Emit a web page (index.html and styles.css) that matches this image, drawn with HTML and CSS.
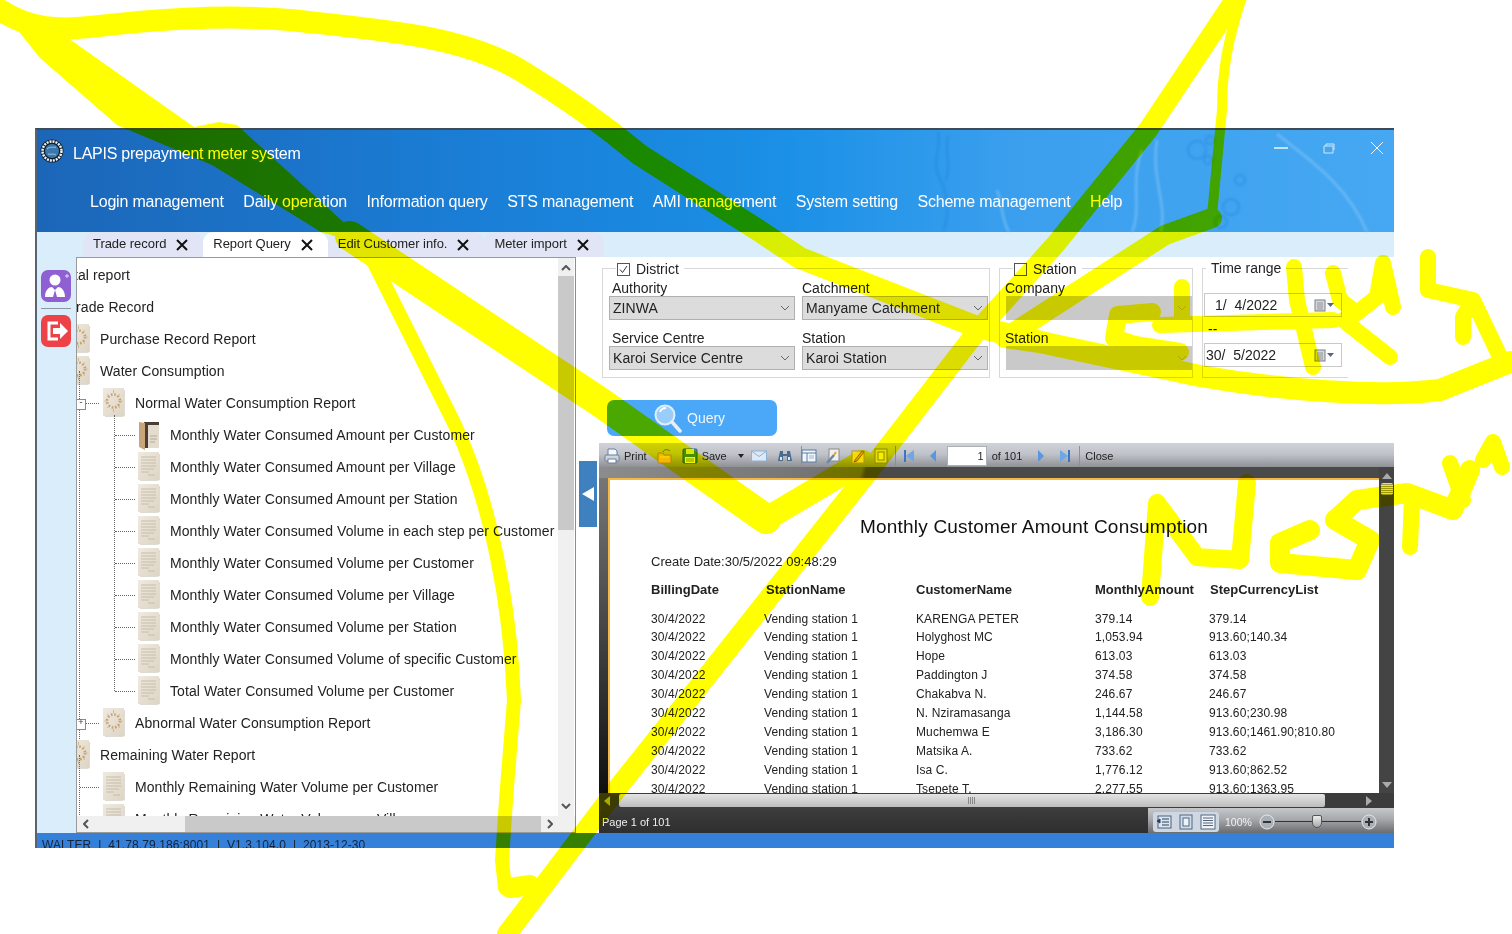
FILE: index.html
```html
<!DOCTYPE html>
<html lang="en">
<head>
<meta charset="utf-8">
<title>LAPIS prepayment meter system</title>
<link rel="stylesheet" href="styles.css">
</head>
<body>
<svg class="defs" width="0" height="0" aria-hidden="true">
  <defs>
    <linearGradient id="paper" x1="0" y1="0" x2="1" y2="1"><stop offset="0" stop-color="#efeadf"/><stop offset="1" stop-color="#ddd4c4"/></linearGradient>
    <symbol id="doc" viewBox="0 0 24 32">
      <path d="M3 3h20v26l-3 1H3z" fill="#b9ae9c" opacity=".45"/>
      <rect x="1" y="1" width="21" height="28" fill="url(#paper)"/>
      <path d="M4 6h15M4 9h15M4 12h15M4 15h15M4 18h13M4 21h8M11 24h7" stroke="#c6bcaa" stroke-width="1"/>
    </symbol>
    <symbol id="gear" viewBox="0 0 24 32">
      <path d="M3 3h20v26l-3 1H3z" fill="#b9ae9c" opacity=".45"/>
      <rect x="1" y="1" width="21" height="28" fill="url(#paper)"/>
      <circle cx="11.500" cy="14" r="6.500" fill="none" stroke="#c8a06c" stroke-width="2.600" stroke-dasharray="1.600 1.800"/>
      <path d="M11.500 3v3M11.500 22v3M2.500 14h3M17.500 14h3M5 7l2 2M18 7l-2 2M5 21l2-2M18 21l-2-2" stroke="#cdb894"/>
    </symbol>
    <symbol id="book" viewBox="0 0 24 32">
      <path d="M7 3h15v26H7z" fill="#e4ddcf"/>
      <path d="M7 3h15v3H11v23H7z" fill="#4a3d33"/>
      <path d="M2 3l6 1v27l-6-3z" fill="#c9a679"/>
      <path d="M13 17h7M13 20h7M13 23h5" stroke="#b5aa96"/>
    </symbol>
    <symbol id="chev" viewBox="0 0 10 6"><path d="M1 1l4 4 4-4" fill="none" stroke="#666" stroke-width="1"/></symbol>
    <symbol id="x" viewBox="0 0 12 12"><path d="M1 1l10 10M11 1L1 11" stroke="#111" stroke-width="2"/></symbol>
    <symbol id="cal" viewBox="0 0 20 13">
      <rect x="1" y="1" width="10" height="11" fill="#d8d8d8" stroke="#77808c"/>
      <path d="M3 4h6M3 6h6M3 8h6M3 10h6" stroke="#8d95a0"/>
      <path d="M13 4h7l-3.500 4z" fill="#5c6678"/>
    </symbol>
  </defs>
</svg>

<div class="page">
  <div class="window">
    <header class="head">
      <svg class="splash" viewBox="0 0 1359 102" width="1359" height="102" aria-hidden="true">
        <g fill="none" stroke="#1f7fd8" stroke-width="2" opacity=".4">
          <path d="M901 2c4 14-6 28 0 42s14 28 6 56"/>
          <path d="M911 6c-4 16 4 26-2 44"/>
          <circle cx="1160" cy="20" r="9"/><circle cx="1173" cy="10" r="4"/><circle cx="1171" cy="30" r="4"/>
          <circle cx="1203" cy="50" r="5"/><circle cx="1194" cy="77" r="8"/><circle cx="1184" cy="92" r="6"/>
        </g>
        <g fill="none" stroke="#8ccaf8" stroke-width="3" opacity=".45">
          <path d="M1105 20c-12 30 0 60-10 82"/>
          <path d="M1120 10c-6 40 10 60 4 92"/>
          <path d="M1240 4c30 24 70 50 90 98"/>
          <path d="M960 60c6 14 4 30 12 42"/>
        </g>
      </svg>
      <div class="titlebar">
        <svg class="logo" viewBox="0 0 24 24" width="24" height="24" aria-hidden="true">
          <circle cx="12" cy="12" r="11.500" fill="#10202f"/>
          <circle cx="12" cy="12" r="9.500" fill="none" stroke="#eef2f6" stroke-width="2.500" stroke-dasharray="2 1"/>
          <circle cx="12" cy="12" r="7" fill="#3a78ac"/>
          <path d="M7 10c3-3 6-1 9-2M8 15c3 1 6-1 8 1" stroke="#9cc4e4" fill="none"/>
        </svg>
        <span class="title">LAPIS prepayment meter system</span>
        <div class="winctl">
          <svg viewBox="0 0 16 16" width="16" height="16" aria-hidden="true"><path d="M1 8h14" stroke="#bfe3fb" stroke-width="2"/></svg>
          <svg viewBox="0 0 16 16" width="16" height="16" aria-hidden="true"><path d="M3 6h9v7H3zM5 6V4h8v6" fill="none" stroke="#cfe9fb"/></svg>
          <svg viewBox="0 0 16 16" width="16" height="16" aria-hidden="true"><path d="M2 2l12 12M14 2L2 14" stroke="#fff" stroke-width="1"/></svg>
        </div>
      </div>
      <nav class="nav">
        <span>Login management</span><span>Daily operation</span><span>Information query</span><span>STS management</span><span>AMI management</span><span>System setting</span><span>Scheme management</span><span>Help</span>
      </nav>
    </header>

    <div class="tabs">
      <div class="tab"><span>Trade record</span><svg class="x"><use href="#x"/></svg></div>
      <div class="tab active"><span>Report Query</span><svg class="x"><use href="#x"/></svg></div>
      <div class="tab"><span>Edit Customer info.</span><svg class="x"><use href="#x"/></svg></div>
      <div class="tab"><span>Meter import</span><svg class="x"><use href="#x"/></svg></div>
    </div>

    <main class="main">
      <aside class="rail">
        <button class="railbtn purple" type="button" aria-label="User">
          <svg viewBox="0 0 30 32" width="30" height="32" aria-hidden="true"><circle cx="14" cy="10" r="5.500" fill="#fff"/><path d="M4 27c0-7 4-10 7-10l3 3 3-3c3 0 7 3 7 10h-8l-2-7-2 7z" fill="#fff"/><path d="M24 6h4M26 4v4" stroke="#e6dcf6"/></svg>
        </button>
        <div class="raildiv"></div>
        <button class="railbtn red" type="button" aria-label="Exit">
          <svg viewBox="0 0 30 32" width="30" height="32" aria-hidden="true"><path d="M17 8H8v16h9" fill="none" stroke="#fff" stroke-width="3"/><path d="M12 13h7V8l8 8-8 8v-5h-7z" fill="#fff"/></svg>
        </button>
      </aside>

      <section class="tree">
        <div class="treebody">
          <ul class="rows">
            <li class="row l0 shifted"><span class="lbl">Total report</span></li>
            <li class="row l0"><span class="lbl">Trade Record</span></li>
            <li class="row l1"><svg class="ic"><use href="#gear"/></svg><span class="lbl">Purchase Record Report</span></li>
            <li class="row l1"><svg class="ic"><use href="#gear"/></svg><span class="lbl">Water Consumption</span></li>
            <li>
              <ul class="kids k1">
                <li class="row l2 conn minus"><svg class="ic"><use href="#gear"/></svg><span class="lbl">Normal Water Consumption Report</span></li>
                <li>
                  <ul class="kids k2">
                    <li class="row l3 conn"><svg class="ic"><use href="#book"/></svg><span class="lbl">Monthly Water Consumed Amount per Customer</span></li>
                    <li class="row l3 conn"><svg class="ic"><use href="#doc"/></svg><span class="lbl">Monthly Water Consumed Amount per Village</span></li>
                    <li class="row l3 conn"><svg class="ic"><use href="#doc"/></svg><span class="lbl">Monthly Water Consumed Amount per Station</span></li>
                    <li class="row l3 conn"><svg class="ic"><use href="#doc"/></svg><span class="lbl">Monthly Water Consumed Volume in each step per Customer</span></li>
                    <li class="row l3 conn"><svg class="ic"><use href="#doc"/></svg><span class="lbl">Monthly Water Consumed Volume per Customer</span></li>
                    <li class="row l3 conn"><svg class="ic"><use href="#doc"/></svg><span class="lbl">Monthly Water Consumed Volume per Village</span></li>
                    <li class="row l3 conn"><svg class="ic"><use href="#doc"/></svg><span class="lbl">Monthly Water Consumed Volume per Station</span></li>
                    <li class="row l3 conn"><svg class="ic"><use href="#doc"/></svg><span class="lbl">Monthly Water Consumed Volume of specific Customer</span></li>
                    <li class="row l3 conn"><svg class="ic"><use href="#doc"/></svg><span class="lbl">Total Water Consumed Volume per Customer</span></li>
                  </ul>
                </li>
                <li class="row l2 conn plus"><svg class="ic"><use href="#gear"/></svg><span class="lbl">Abnormal Water Consumption Report</span></li>
              </ul>
            </li>
            <li class="row l1"><svg class="ic"><use href="#gear"/></svg><span class="lbl">Remaining Water Report</span></li>
            <li>
              <ul class="kids k1">
                <li class="row l2 conn"><svg class="ic"><use href="#doc"/></svg><span class="lbl">Monthly Remaining Water Volume per Customer</span></li>
                <li class="row l2 conn"><svg class="ic"><use href="#doc"/></svg><span class="lbl">Monthly Remaining Water Volume per Village</span></li>
              </ul>
            </li>
          </ul>
          <div class="vscroll">
            <svg class="arrow" viewBox="0 0 10 6" width="10" height="6" aria-hidden="true"><path d="M1 5l4-4 4 4" fill="none" stroke="#555" stroke-width="2"/></svg>
            <div class="vthumb"></div>
            <svg class="arrow arrow-end" viewBox="0 0 10 6" width="10" height="6" aria-hidden="true"><path d="M1 1l4 4 4-4" fill="none" stroke="#555" stroke-width="2"/></svg>
          </div>
        </div>
        <div class="hscroll">
          <svg viewBox="0 0 6 10" width="6" height="10" aria-hidden="true"><path d="M5 1L1 5l4 4" fill="none" stroke="#555" stroke-width="2"/></svg>
          <div class="hthumb"></div>
          <svg viewBox="0 0 6 10" width="6" height="10" aria-hidden="true"><path d="M1 1l4 4-4 4" fill="none" stroke="#555" stroke-width="2"/></svg>
        </div>
      </section>

      <section class="right">
        <form class="filters">
          <fieldset class="fs fs-district">
            <legend><span class="check"><svg viewBox="0 0 13 13" width="13" height="13" aria-hidden="true"><path d="M3 6.500l2.500 3L10 3" fill="none" stroke="#333"/></svg></span>District</legend>
            <div class="fieldgrid">
              <div class="field"><label class="flabel">Authority</label><div class="sel"><span>ZINWA</span><svg class="chev"><use href="#chev"/></svg></div></div>
              <div class="field alt"><label class="flabel">Catchment</label><div class="sel"><span>Manyame Catchment</span><svg class="chev"><use href="#chev"/></svg></div></div>
              <div class="field"><label class="flabel">Service Centre</label><div class="sel"><span>Karoi Service Centre</span><svg class="chev"><use href="#chev"/></svg></div></div>
              <div class="field alt"><label class="flabel">Station</label><div class="sel"><span>Karoi Station</span><svg class="chev"><use href="#chev"/></svg></div></div>
            </div>
          </fieldset>
          <fieldset class="fs fs-station">
            <legend><span class="check"></span>Station</legend>
            <div class="fieldgrid single">
              <div class="field alt out"><label class="flabel">Company</label><div class="sel off"><span></span><svg class="chev"><use href="#chev"/></svg></div></div>
              <div class="field alt out"><label class="flabel">Station</label><div class="sel off"><span></span><svg class="chev"><use href="#chev"/></svg></div></div>
            </div>
          </fieldset>
          <fieldset class="fs fs-time">
            <legend class="plain">Time range</legend>
            <div class="date first"><span>1/  4/2022</span><svg class="cal"><use href="#cal"/></svg></div>
            <div class="dash">--</div>
            <div class="date"><span>30/  5/2022</span><svg class="cal"><use href="#cal"/></svg></div>
          </fieldset>
        </form>

        <button class="query" type="button">
          <svg viewBox="0 0 30 30" width="30" height="30" aria-hidden="true"><circle cx="12" cy="12" r="9.500" fill="#cfe6fb" fill-opacity=".6" stroke="#dfeefb" stroke-width="2"/><path d="M7 9c1-3 3-4 6-4" stroke="#fff" stroke-width="2" fill="none"/><path d="M19 19l8 9" stroke="#e9eef3" stroke-width="3.500" stroke-linecap="round"/></svg>
          <span>Query</span>
        </button>

        <div class="lower">
          <div class="gutter"><button class="collapse" type="button" aria-label="Collapse"><svg viewBox="0 0 12 14" width="12" height="14" aria-hidden="true"><path d="M12 0v14L0 7z" fill="#fff"/></svg></button></div>
          <div class="viewer">
            <div class="toolbar">
              <div class="tgroup">
                <svg class="ti" viewBox="0 0 16 16" aria-hidden="true"><path d="M4 7V1h7l2 2v4" fill="#f4f7fb" stroke="#6d7f96"/><rect x="1" y="7" width="14" height="6" rx="1" fill="#cdd5df" stroke="#6d7f96"/><rect x="4" y="11" width="8" height="4" fill="#fff" stroke="#6d7f96"/></svg>
                <span>Print</span>
              </div>
              <svg class="ti m-open" viewBox="0 0 16 16" aria-hidden="true"><path d="M1 5h5l1 2h7v8H1z" fill="#f2b928" stroke="#b98612"/><path d="M6 4c1-3 5-3 7-1" fill="none" stroke="#5a7f96"/><path d="M3 9h9" stroke="#fbe08a"/></svg>
              <div class="tgroup m-save">
                <svg class="ti" viewBox="0 0 16 16" aria-hidden="true"><rect x="1" y="1" width="14" height="14" rx="1" fill="#4a8ed0" stroke="#2a6099"/><rect x="4" y="1" width="8" height="5" fill="#dbe8f4"/><rect x="3" y="9" width="10" height="6" fill="#eef6e0"/><path d="M4 11h8M4 13h8" stroke="#7aa04a"/></svg>
                <span>Save</span>
              </div>
              <svg class="tcaret m-caret" viewBox="0 0 6 4" width="6" height="4" aria-hidden="true"><path d="M0 0h6L3 4z" fill="#222"/></svg>
              <svg class="ti m-mail" viewBox="0 0 16 16" aria-hidden="true"><rect x="0.500" y="3" width="15" height="10" fill="#dde9f6" stroke="#8fb0d0"/><path d="M1 3.500l7 5 7-5" fill="none" stroke="#8fb0d0"/></svg>
              <svg class="ti m-bino" viewBox="0 0 16 16" aria-hidden="true"><path d="M3 3h3v3h4V3h3l2 10h-5V8H6v5H1z" fill="#4a6a8e"/><path d="M3 9h2v3H3zM11 9h2v3h-2z" fill="#dde9f6"/></svg>
              <i class="tsep m-sep1"></i>
              <svg class="ti m-layout" viewBox="0 0 16 16" aria-hidden="true"><rect x="1" y="2" width="14" height="12" fill="#f2f6fb" stroke="#5a7da4"/><path d="M1 5h14M6 5v9" stroke="#5a7da4"/><path d="M8 8h5M8 10h5" stroke="#9db4cc"/></svg>
              <svg class="ti m-tool" viewBox="0 0 16 16" aria-hidden="true"><rect x="4" y="1" width="10" height="12" fill="#f0f0ee" stroke="#8a8a8a"/><path d="M2 15l7-8" stroke="#6d87a8" stroke-width="2.500"/><path d="M9 7l2-3" stroke="#d9a928" stroke-width="2"/></svg>
              <svg class="ti m-note" viewBox="0 0 16 16" aria-hidden="true"><rect x="2" y="3" width="12" height="12" fill="#f4dc6a" stroke="#b1932b"/><path d="M5 12l7-9 2 1-7 9-3 1z" fill="#e9a02a" stroke="#94691a"/></svg>
              <svg class="ti m-book" viewBox="0 0 16 16" aria-hidden="true"><rect x="2" y="1" width="12" height="14" fill="#e6dc66" stroke="#8b8a2a"/><rect x="5" y="4" width="6" height="8" fill="#f6f0b0" stroke="#8b8a2a"/></svg>
              <i class="tsep m-sep2"></i>
              <svg class="nv m-first" viewBox="0 0 12 14" aria-hidden="true"><path d="M1 1h2v12H1z" fill="#3b76c4"/><path d="M11 1v12L3 7z" fill="#6fa6e6"/></svg>
              <svg class="nv m-prev" viewBox="0 0 12 14" aria-hidden="true"><path d="M9 1v12L3 7z" fill="#5a96de"/></svg>
              <div class="pageinput m-input">1</div>
              <span class="of">of 101</span>
              <svg class="nv m-next" viewBox="0 0 12 14" aria-hidden="true"><path d="M3 1v12l6-6z" fill="#5a96de"/></svg>
              <svg class="nv m-last" viewBox="0 0 12 14" aria-hidden="true"><path d="M1 1v12l8-6z" fill="#6fa6e6"/><path d="M9 1h2v12H9z" fill="#3b76c4"/></svg>
              <i class="tsep m-sep3"></i>
              <span class="m-close">Close</span>
            </div>

            <div class="stage">
              <div class="sheet">
                <h1 class="rtitle">Monthly Customer Amount Consumption</h1>
                <p class="rdate">Create Date:30/5/2022 09:48:29</p>
                <div class="rgrid rhead"><span>BillingDate</span><span class="s1">StationName</span><span>CustomerName</span><span>MonthlyAmount</span><span class="s2">StepCurrencyList</span></div>
                <div class="rgrid rrow"><span>30/4/2022</span><span>Vending station 1</span><span>KARENGA PETER</span><span>379.14</span><span>379.14</span></div>
                <div class="rgrid rrow"><span>30/4/2022</span><span>Vending station 1</span><span>Holyghost MC</span><span>1,053.94</span><span>913.60;140.34</span></div>
                <div class="rgrid rrow"><span>30/4/2022</span><span>Vending station 1</span><span>Hope</span><span>613.03</span><span>613.03</span></div>
                <div class="rgrid rrow"><span>30/4/2022</span><span>Vending station 1</span><span>Paddington J</span><span>374.58</span><span>374.58</span></div>
                <div class="rgrid rrow"><span>30/4/2022</span><span>Vending station 1</span><span>Chakabva N.</span><span>246.67</span><span>246.67</span></div>
                <div class="rgrid rrow"><span>30/4/2022</span><span>Vending station 1</span><span>N. Nziramasanga</span><span>1,144.58</span><span>913.60;230.98</span></div>
                <div class="rgrid rrow"><span>30/4/2022</span><span>Vending station 1</span><span>Muchemwa E</span><span>3,186.30</span><span>913.60;1461.90;810.80</span></div>
                <div class="rgrid rrow"><span>30/4/2022</span><span>Vending station 1</span><span>Matsika A.</span><span>733.62</span><span>733.62</span></div>
                <div class="rgrid rrow"><span>30/4/2022</span><span>Vending station 1</span><span>Isa C.</span><span>1,776.12</span><span>913.60;862.52</span></div>
                <div class="rgrid rrow"><span>30/4/2022</span><span>Vending station 1</span><span>Tsepete T.</span><span>2,277.55</span><span>913.60;1363.95</span></div>
              </div>
              <div class="dscroll">
                <svg viewBox="0 0 10 6" width="10" height="6" aria-hidden="true"><path d="M0 6l5-6 5 6z" fill="#aaa"/></svg>
                <div class="dthumb"></div>
                <svg class="d-end" viewBox="0 0 10 6" width="10" height="6" aria-hidden="true"><path d="M0 0l5 6 5-6z" fill="#aaa"/></svg>
              </div>
            </div>

            <div class="dh">
              <svg viewBox="0 0 6 10" width="6" height="10" aria-hidden="true"><path d="M6 0v10L0 5z" fill="#aaa"/></svg>
              <div class="dhthumb"><i></i></div>
              <svg viewBox="0 0 6 10" width="6" height="10" aria-hidden="true"><path d="M0 0v10l6-5z" fill="#aaa"/></svg>
            </div>

            <div class="pagebar">
              <span class="pagelabel">Page 1 of 101</span>
              <div class="zoombar">
                <div class="viewbtns">
                  <svg viewBox="0 0 16 16" width="16" height="16" aria-hidden="true"><rect x="2" y="2" width="13" height="12" fill="#dde6f0" stroke="#4a5f78"/><path d="M1 7l3-2v4zM6 5h7M6 8h7M6 11h7" stroke="#27405f" fill="#27405f"/></svg>
                  <svg viewBox="0 0 16 16" width="16" height="16" aria-hidden="true"><rect x="2" y="1" width="12" height="14" fill="#cfdcec" stroke="#53677f"/><rect x="5" y="4" width="6" height="8" fill="#eef3f9" stroke="#53677f"/></svg>
                  <svg viewBox="0 0 16 16" width="16" height="16" aria-hidden="true"><rect x="1" y="1" width="14" height="14" fill="#eef3f9" stroke="#53677f"/><path d="M3 4h10M3 6.500h10M3 9h10M3 11.500h10" stroke="#53677f"/></svg>
                </div>
                <span class="pct">100%</span>
                <div class="slider">
                  <svg viewBox="0 0 16 16" width="16" height="16" aria-hidden="true"><circle cx="8" cy="8" r="7" fill="#aab0b8" stroke="#e8e8e8"/><path d="M4 8h8" stroke="#333" stroke-width="2"/></svg>
                  <div class="track"><i class="knob"></i></div>
                  <svg viewBox="0 0 16 16" width="16" height="16" aria-hidden="true"><circle cx="8" cy="8" r="7" fill="#aab0b8" stroke="#e8e8e8"/><path d="M4 8h8M8 4v8" stroke="#333" stroke-width="2"/></svg>
                </div>
              </div>
            </div>
          </div>
        </div>
      </section>
    </main>
    <footer class="status">WALTER &nbsp;|&nbsp; 41.78.79.186:8001 &nbsp;|&nbsp; V1.3.104.0 &nbsp;|&nbsp; 2013-12-30</footer>
  </div>
</div>

<svg class="scribble" viewBox="0 0 1512 934" width="1512" height="934" aria-hidden="true">
  <path class="fillink" d="M0 8L40 58L117 125L212 165L321 232L365 245L350 228L284 168L237 125L219 122L194 127L68 38L50 20Z"/>
  <g class="ink">
    <path class="w22" d="M0 10C30 30 60 30 90 27C150 20 220 14 290 20C380 30 460 35 520 70C570 100 610 130 640 155L761 232L800 258L977 327L1054 345L1200 376C1280 390 1380 398 1440 390L1510 362"/>
    <path class="w30" d="M350 236L600 402L766 519"/>
    <path class="w24" d="M766 519L862 462"/>
    <path class="w20" d="M1238 -5L1148 130L1055 245L978 330L870 470L712 670L620 785L507 934"/>
    <path class="w10" d="M1241 0C1228 40 1222 70 1222 110L1212 215"/>
    <path class="w20" d="M1212 218L1165 235L1005 338L1054 345"/>
    <path class="w14" d="M365 245L455 425C490 500 510 600 514 700L506 800L502 860L505 888"/>
    <path class="w20" d="M510 888L530 885"/>
    <path class="w18" d="M1152 312L1118 315L1114 338L1135 345L1180 352"/>
    <path class="w16" d="M1160 325L1333 320M1182 287V317M1294 267L1297 300L1313 367"/>
    <path class="w16" d="M1333 273L1340 300L1357 313L1377 297L1383 263L1393 307"/>
    <path class="w16" d="M1343 320L1390 357"/>
    <path class="w16" d="M1428 257V290L1473 300L1463 317V337M1473 300L1503 363"/>
    <path class="w18" d="M1150 597L1157 503L1197 557L1240 560L1247 483"/>
    <path class="w20" d="M1310 530L1280 543L1280 563L1357 570L1370 540L1335 520L1357 500L1407 493L1453 510L1470 470"/>
    <path class="w16" d="M1410 547L1412 497M1450 463L1463 500"/>
    <path class="w16" d="M1483 460L1493 442L1502 467"/>
  </g>
</svg>
</body>
</html>
```
FILE: styles.css
```css
* { box-sizing: border-box; }
html, body { margin: 0; padding: 0; height: 100%; }
body { background: #fff; overflow: hidden; font-family: "Liberation Sans", Arial, sans-serif; color: #222; position: relative; }
.defs { position: absolute; }
ul { list-style: none; margin: 0; padding: 0; }
button { border: 0; padding: 0; font: inherit; }

.page { padding: 128px 0 0 35px; }
.window { width: 1359px; height: 720px; border-top: 2px solid #3d4a58; border-left: 2px solid #5a6470; overflow: hidden; background: #fff; display: flex; flex-direction: column; }

/* header */
.head { height: 102px; flex: none; position: relative; color: #fff; background: linear-gradient(90deg, #1c66b8 0%, #1a80d8 35%, #1a90e6 55%, #3b9fee 72%, #46a8f2 100%); }
.splash { position: absolute; left: 0; top: 0; filter: blur(1px); }
.titlebar { position: relative; height: 44px; display: flex; align-items: center; padding-left: 3px; }
.logo { margin-top: -2px; }
.title { font-size: 16px; letter-spacing: -.25px; margin-left: 9px; margin-top: 3px; }
.winctl { margin-left: auto; display: flex; gap: 32px; padding-right: 9px; margin-top: -8px; }
.nav { position: relative; display: flex; gap: 19.5px; padding-left: 53px; padding-top: 19px; font-size: 16px; line-height: 18px; letter-spacing: -.2px; }

/* tabs */
.tabs { height: 25px; flex: none; background: #d9eefa; display: flex; padding-left: 46px; }
.tab { display: flex; align-items: center; gap: 10px; padding: 0 15px 2px 10px; font-size: 13px; letter-spacing: -.05px; color: #222; background: #e1e5f6; border-radius: 11px 11px 0 0; }
.tab.active { background: #fff; }
.x { width: 12px; height: 12px; margin-top: 2px; }

/* layout */
.main { flex: none; height: 576px; display: flex; background: #fff; }
.rail { width: 39px; flex: none; background: #d9eefa; padding: 13px 0 0 4px; display: flex; flex-direction: column; }
.railbtn { width: 30px; height: 32px; border-radius: 7px; display: block; }
.railbtn svg { display: block; }
.purple { background: #8f60d2; }
.red { background: #ee4249; }
.raildiv { height: 1px; width: 30px; background: #8b98a4; margin: 6px 0; }

/* tree */
.tree { width: 500px; flex: none; border: 1px solid #9a9a9a; border-right-color: #8c8c8c; display: flex; flex-direction: column; overflow: hidden; }
.treebody { flex: 1; min-height: 0; display: flex; overflow: hidden; }
.rows { flex: 1; min-width: 0; padding-top: 1px; overflow: hidden; }
.row { height: 32px; display: flex; align-items: center; position: relative; font-size: 14px; letter-spacing: .08px; color: #222; white-space: nowrap; }
.ic { width: 24px; height: 32px; flex: none; }
.lbl { margin-left: 9px; }
.l0 { margin-left: -9px; }
.l0 .lbl { margin-left: 0; }
.l0.shifted { margin-left: -18px; }
.l1 { margin-left: -10px; }
.kids { position: relative; }
.kids.k1::before { content: ""; position: absolute; left: 2px; top: -16px; bottom: 0; border-left: 1px dotted #666; }
.l2 { padding-left: 25px; }
.k2 { position: relative; }
.k2::before { content: ""; position: absolute; left: 37px; top: -4px; bottom: 16px; border-left: 1px dotted #666; }
.l3 { padding-left: 60px; }
.conn::before { content: ""; position: absolute; top: 16px; height: 0; border-top: 1px dotted #666; }
.l2.conn::before { left: 3px; width: 19px; }
.l3.conn::before { left: 38px; width: 20px; }
.minus::after, .plus::after { position: absolute; left: -1px; top: 12px; width: 8px; height: 9px; border: 1px solid #8a8a8a; background: #fff; font: 9px/7px "Liberation Mono", monospace; text-align: center; color: #333; letter-spacing: 0; }
.minus::after { content: "-"; }
.plus::after { content: "+"; }

.vscroll { width: 16px; margin-right: 1px; flex: none; background: #f0f0f0; display: flex; flex-direction: column; align-items: center; padding-top: 7px; }
.vthumb { width: 100%; height: 254px; background: #c9c9c9; margin-top: 5px; }
.arrow { flex: none; }
.arrow-end { margin-top: auto; margin-bottom: 7px; }
.hscroll { height: 16px; flex: none; background: #f0f0f0; display: flex; align-items: center; padding: 0 22px 0 6px; }
.hthumb { width: 356px; height: 100%; background: #c9c9c9; margin-left: 96px; margin-right: auto; }

/* right side */
.right { flex: 1; min-width: 0; display: flex; flex-direction: column; }
.filters { display: flex; gap: 9px; padding: 3px 0 0 26px; height: 121px; }
.fs { margin: 0; min-width: 0; border: 1px solid #d8d8d8; padding: 4px 0 7px 6px; }
.fs legend { font-size: 14px; line-height: 16px; padding: 0 5px 0 1px; margin-left: 7px; display: flex; align-items: center; gap: 6px; color: #222; position: relative; top: 1px; }
.fs-district { width: 388px; }
.fs-station { width: 194px; }
.fs-time { width: 146px; border-right: 0; padding: 17px 0 0 0; }
.fs legend.plain { margin-left: 3px; padding: 0 5px; top: 0; }
.check { width: 13px; height: 13px; border: 1px solid #555; display: block; background: #fff; }
.check svg { display: block; margin: -1px; }
.fieldgrid { display: grid; grid-template-columns: 186px 186px; column-gap: 7px; row-gap: 10px; }
.fieldgrid.single { grid-template-columns: 186px; }
.flabel { display: block; font-size: 14px; line-height: 16px; padding-left: 3px; color: #222; }
.field.alt .flabel { padding-left: 0; }
.field.out .flabel { margin-left: -1px; }
.sel { height: 24px; background: #dcdcdc; border: 1px solid #b0b0b0; font-size: 14px; letter-spacing: .05px; display: flex; align-items: center; padding: 0 4px 0 3px; color: #222; }
.sel span { flex: 1; }
.sel.off { background: #c9c9c9; border-color: #c9c9c9; }
.sel.off .chev { opacity: .3; }
.chev { width: 10px; height: 6px; }
.date { height: 24px; width: 138px; border: 1px solid #c9c9c9; display: flex; align-items: center; font-size: 14px; white-space: pre; padding-left: 1px; margin-left: 1px; }
.date.first { padding-left: 10px; }
.date span { flex: 1; }
.cal { width: 20px; height: 13px; margin-right: 7px; }
.dash { height: 26px; line-height: 20px; font-size: 14px; padding-left: 5px; padding-top: 2px; }

.query { width: 170px; height: 36px; margin: 22px 0 7px 31px; flex: none; border-radius: 7px; background: #4ba8f8; color: #eef6fd; display: flex; align-items: center; padding-left: 46px; font-size: 14px; gap: 4px; }
.query svg { flex: none; }
.query span { margin-top: -1px; }

.lower { flex: 1; min-height: 0; display: flex; }
.gutter { width: 23px; flex: none; padding: 18px 0 0 3px; }
.collapse { width: 18px; height: 66px; background: #3f80be; display: flex; align-items: center; justify-content: center; }
.viewer { flex: 1; min-width: 0; display: flex; flex-direction: column; background: #3a3a3a; }
.toolbar { height: 24px; flex: none; display: flex; align-items: center; font-size: 11px; color: #222; background: linear-gradient(#cfd2d8 0%, #c0c3ca 45%, #8f9196 100%); padding: 1px 0 0 5px; }
.tgroup { display: flex; align-items: center; gap: 4px; }
.ti { width: 16px; height: 16px; flex: none; }
.nv { width: 12px; height: 14px; flex: none; }
.tsep { width: 1px; height: 20px; background: #8e9096; flex: none; }
.m-open { margin-left: 10px; }
.m-save { margin-left: 9px; }
.m-caret { margin-left: 11px; }
.m-mail { margin-left: 7px; }
.m-bino { margin-left: 10px; }
.m-sep1 { margin-left: 8px; }
.m-layout { margin-left: -1px; }
.m-tool { margin-left: 8px; }
.m-note { margin-left: 9px; }
.m-book { margin-left: 7px; }
.m-sep2 { margin-left: 6px; }
.m-first { margin-left: 7px; }
.m-prev { margin-left: 12px; }
.pageinput { width: 40px; height: 20px; margin-left: 8px; background: #fff; border: 1px solid #aeb0b4; text-align: right; line-height: 18px; padding-right: 2px; }
.of { margin-left: 5px; }
.m-next { margin-left: 13px; }
.m-last { margin-left: 12px; }
.m-sep3 { margin-left: 8px; }
.m-close { margin-left: 5px; }

.stage { flex: none; height: 326px; display: flex; overflow: hidden; padding: 11px 0 0 9px;
  background: linear-gradient(105deg, #8c8c8c 0, #6f6f6f 33%, #4a4a4a 33.6%, #4a4a4a 100%) 0 0 / 100% 11px no-repeat,
              linear-gradient(#7a7a7a, #101010) 0 0 / 9px 100% no-repeat, #4a4a4a; }
.sheet { width: 771px; flex: none; background: #fff; border-top: 2px solid #f5b942; border-left: 2px solid #f5b942; padding: 35px 0 0 41px; overflow: hidden; }
.rtitle { font-size: 19px; letter-spacing: .2px; font-weight: 400; line-height: 24px; margin: 0 0 15px 209px; color: #111; white-space: nowrap; }
.rdate { font-size: 13px; line-height: 16px; margin: 0 0 12px; color: #222; }
.rgrid { display: grid; grid-template-columns: 113px 152px 179px 114px 1fr; font-size: 12px; letter-spacing: .12px; white-space: nowrap; }
.rhead { font-size: 13px; letter-spacing: 0; font-weight: 700; line-height: 16px; margin-bottom: 11.5px; color: #222; }
.s1 { padding-left: 2px; }
.s2 { padding-left: 1px; }
.rrow { line-height: 18.9px; height: 18.9px; color: #222; }
.dscroll { width: 15px; flex: none; background: #444; display: flex; flex-direction: column; align-items: center; margin-top: -11px; padding-top: 6px; }
.dthumb { width: 12px; height: 12px; margin-top: 4px; border-radius: 2px; background: repeating-linear-gradient(#f5e06a 0 1px, #9f9a5a 1px 2px); }
.d-end { margin-top: auto; margin-bottom: 5px; }
.dh { height: 15px; flex: none; display: flex; align-items: center; background: #3c3c3c; padding: 0 22px 0 5px; }
.dhthumb { width: 706px; height: 13px; margin-left: 9px; margin-right: auto; border-radius: 2px; background: linear-gradient(#e4e4e4, #bdbdbd); display: flex; align-items: center; justify-content: center; }
.dhthumb i { width: 8px; height: 7px; background: repeating-linear-gradient(90deg, #888 0 1px, transparent 1px 2px); }
.pagebar { flex: 1; min-height: 0; display: flex; align-items: stretch; background: linear-gradient(#3d3d3d, #2e2e2e); color: #eee; font-size: 11px; }
.pagelabel { align-self: center; padding: 3px 0 0 3px; }
.zoombar { margin-left: auto; width: 246px; display: flex; align-items: center; padding: 2px 0 0 5px; background: linear-gradient(#c6c8cc 0%, #a6a8ac 45%, #6a6c70 100%); color: #eef; }
.viewbtns { display: flex; gap: 6px; padding: 2px 3px; background: #cfd8e2; border-radius: 3px; height: 20px; }
.pct { margin-left: 6px; font-size: 10.5px; color: #f2f2f2; }
.slider { display: flex; align-items: center; margin-left: 7px; }
.track { width: 86px; height: 1px; background: #333; position: relative; }
.knob { position: absolute; left: 37px; top: -6px; width: 10px; height: 13px; border: 1px solid #555; background: linear-gradient(#eee, #a8a8a8); border-radius: 2px 2px 5px 5px; }

/* status */
.status { flex: none; height: 15px; line-height: 24px; background: #3580d8; color: #12233a; font-size: 12px; letter-spacing: .1px; padding-left: 5px; overflow: hidden; white-space: nowrap; }

/* annotation over the screenshot */
.scribble { position: absolute; left: 0; top: 0; mix-blend-mode: multiply; pointer-events: none; }
.fillink { fill: #ffff00; }
.ink path { fill: none; stroke: #ffff00; stroke-linecap: round; stroke-linejoin: round; }
.w10 { stroke-width: 10px; }
.w14 { stroke-width: 14px; }
.w16 { stroke-width: 16px; }
.w18 { stroke-width: 18px; }
.w20 { stroke-width: 20px; }
.w22 { stroke-width: 22px; }
.w24 { stroke-width: 24px; }
.w30 { stroke-width: 30px; }
```
